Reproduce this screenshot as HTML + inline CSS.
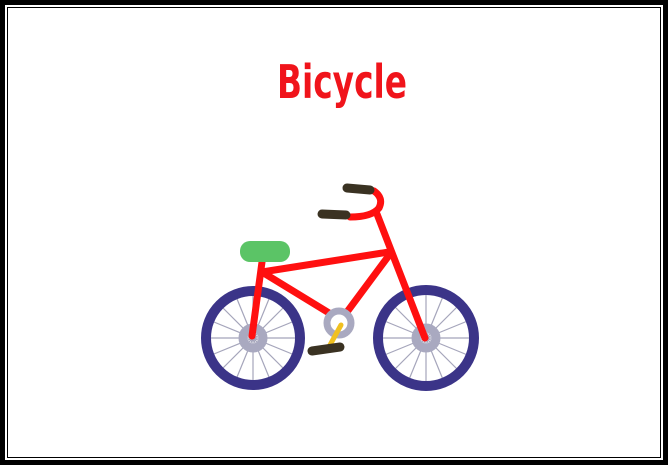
<!DOCTYPE html>
<html><head><style>
html,body{margin:0;padding:0;background:#fff;}
body{width:668px;height:465px;position:relative;overflow:hidden;}
.o{position:absolute;left:0;top:0;width:658px;height:455px;border:5px solid #000;}
.i{position:absolute;left:7px;top:7px;width:652px;height:449px;border:1px solid #000;}
svg{position:absolute;left:0;top:0;}
</style></head><body>
<div class="o"></div><div class="i"></div>
<svg width="668" height="465" viewBox="0 0 668 465">
<text x="277" y="98" textLength="130" lengthAdjust="spacingAndGlyphs" font-family="DejaVu Sans, sans-serif" font-weight="bold" font-size="46" fill="#f0141b">Bicycle</text>
<g stroke="#a5a5bb" stroke-width="1.2">
<g>
<line x1="253" y1="290" x2="253" y2="386"/><line x1="205" y1="338" x2="301" y2="338"/>
<line x1="219" y1="304" x2="287" y2="372"/><line x1="287" y1="304" x2="219" y2="372"/>
<line x1="235" y1="294" x2="271" y2="382"/><line x1="271" y1="294" x2="235" y2="382"/>
<line x1="209" y1="320" x2="297" y2="356"/><line x1="297" y1="320" x2="209" y2="356"/>
</g>
<g transform="translate(173,0)">
<line x1="253" y1="290" x2="253" y2="386"/><line x1="205" y1="338" x2="301" y2="338"/>
<line x1="219" y1="304" x2="287" y2="372"/><line x1="287" y1="304" x2="219" y2="372"/>
<line x1="235" y1="294" x2="271" y2="382"/><line x1="271" y1="294" x2="235" y2="382"/>
<line x1="209" y1="320" x2="297" y2="356"/><line x1="297" y1="320" x2="209" y2="356"/>
</g>
</g>
<circle cx="253" cy="338" r="47" fill="none" stroke="#3b3488" stroke-width="10"/>
<circle cx="426" cy="338" r="48" fill="none" stroke="#3b3488" stroke-width="10"/>
<circle cx="253" cy="338" r="10" fill="none" stroke="#a9a9c0" stroke-width="9"/>
<circle cx="426" cy="338" r="10" fill="none" stroke="#a9a9c0" stroke-width="9"/>
<g stroke="#ff1010" stroke-width="7" stroke-linecap="round" fill="none">
<line x1="262" y1="262" x2="252" y2="336"/>
<line x1="262" y1="272" x2="389" y2="252"/>
<line x1="262" y1="272" x2="334" y2="316"/>
<line x1="344" y1="316" x2="390" y2="254"/>
<line x1="377" y1="214" x2="425" y2="338"/>
<path d="M350 217 Q372 217 379 208 Q384 198 374 191 L370 190"/>
</g>
<circle cx="339" cy="323" r="12" fill="#fff" stroke="#a9a9c0" stroke-width="7"/>
<line x1="341" y1="325" x2="330" y2="345" stroke="#f0c020" stroke-width="5" stroke-linecap="round"/>
<rect x="240" y="241" width="50" height="21" rx="10" fill="#5bc466"/>
<g stroke="#3a3222" stroke-width="9" stroke-linecap="round">
<line x1="347" y1="188" x2="370" y2="190"/>
<line x1="322" y1="214" x2="346" y2="215"/>
<line x1="312" y1="351" x2="340" y2="347"/>
</g>
</svg>
</body></html>
